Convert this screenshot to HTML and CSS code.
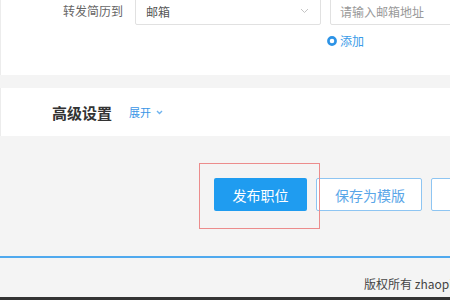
FILE: index.html
```html
<!DOCTYPE html>
<html lang="zh">
<head>
<meta charset="utf-8">
<link rel="stylesheet" href="styles.css">
</head>
<body>
<div class="page">
  <section class="card form-card">
    <div class="row">
      <label class="label">转发简历到</label>
      <div class="select">
        <span>邮箱</span>
        <svg class="chev" width="9" height="6" viewBox="0 0 9 6"><path d="M1 1l3.5 3.5L8 1" fill="none" stroke="#c4c4c4" stroke-width="1"/></svg>
      </div>
      <div class="input">请输入邮箱地址</div>
    </div>
    <div class="add">
      <svg width="10" height="10" viewBox="0 0 10 10"><circle cx="5" cy="5" r="3.6" fill="#fff" stroke="#2d93e6" stroke-width="2.6"/></svg>
      <span>添加</span>
    </div>
  </section>
  <section class="card adv-card">
    <h3 class="adv-title">高级设置</h3>
    <span class="expand">展开</span>
    <svg class="exp-chev" width="7" height="5" viewBox="0 0 7 5"><path d="M1 1l2.5 2.5L6 1" fill="none" stroke="#6fb3ee" stroke-width="1.4"/></svg>
  </section>
  <div class="actions">
    <button class="btn primary">发布职位</button>
    <button class="btn outline">保存为模版</button>
    <button class="btn outline third">预览</button>
    <div class="highlight"></div>
  </div>
  <footer class="footer">
    <span>版权所有 zhaopin.com</span>
  </footer>
  <div class="taskbar"></div>
</div>
</body>
</html>
```

FILE: styles.css
```css
* { box-sizing: border-box; }
html, body { margin: 0; padding: 0; }
body {
  width: 450px;
  height: 300px;
  overflow: hidden;
  background: #f4f4f4;
  font-family: "Noto Sans CJK SC", "Noto Sans", sans-serif;
  font-size: 12px;
  color: #333;
}
.page { display: flex; flex-direction: column; height: 300px; overflow: hidden; }
.card { background: #fff; border-left: 1px solid #ececec; }
.form-card {
  height: 75px;
  flex-shrink: 0;
  display: flex;
  flex-direction: column;
  overflow: hidden;
}
.row { display: flex; align-items: center; height: 28px; margin-top: -3px; }
.label {
  flex-shrink: 0;
  width: 122px;
  text-align: right;
  color: #666;
  font-size: 12px;
  margin-right: 12px;
  line-height: 28px;
}
.select {
  flex-shrink: 0;
  width: 186px;
  height: 28px;
  border: 1px solid #e1e1e1;
  border-radius: 2px;
  display: flex;
  align-items: center;
  justify-content: space-between;
  padding: 0 11px 0 10px;
  color: #555;
}
.input {
  flex-shrink: 0;
  width: 150px;
  height: 28px;
  margin-left: 9px;
  border: 1px solid #e1e1e1;
  border-radius: 2px;
  display: flex;
  align-items: center;
  padding-left: 9px;
  color: #999;
  white-space: nowrap;
}
.add {
  display: flex;
  align-items: center;
  gap: 3px;
  margin-left: 326px;
  margin-top: 7px;
  color: #3a9be8;
  font-size: 12px;
}
.adv-card {
  flex-shrink: 0;
  margin-top: 13px;
  height: 48px;
  display: flex;
  align-items: center;
  padding-left: 51px;
}
.adv-title {
  margin: 0;
  font-size: 15px;
  font-weight: bold;
  color: #333;
}
.expand {
  margin-left: 17px;
  font-size: 11px;
  color: #3a95e6;
}
.exp-chev { margin-left: 5px; }
.actions {
  position: relative;
  flex-shrink: 0;
  display: flex;
  gap: 9px;
  padding-left: 214px;
  margin-top: 42px;
  height: 33px;
  white-space: nowrap;
}
.btn {
  height: 33px;
  border-radius: 2px;
  font-family: inherit;
  font-size: 14px;
  padding: 0 18px;
  flex-shrink: 0;
  cursor: pointer;
}
.primary {
  width: 93px;
  background: #1f9cf0;
  border: none;
  color: #fff;
}
.outline {
  width: 106px;
  background: #fff;
  border: 1px solid #8ec5f2;
  color: #5aa6e8;
}
.third { width: 70px; }
.highlight {
  position: absolute;
  left: 199px;
  top: -15px;
  width: 121px;
  height: 66px;
  border: 1px solid #ec8c8c;
  pointer-events: none;
}
.footer {
  flex-shrink: 0;
  margin-top: 45px;
  border-top: 2px solid #4fa9ee;
  height: 41px;
  display: flex;
  align-items: center;
  padding-left: 364px;
  padding-top: 12px;
  white-space: nowrap;
  overflow: hidden;
  color: #444;
  font-size: 12px;
}
.taskbar { height: 3px; background: #333; flex-shrink: 0; }
```
